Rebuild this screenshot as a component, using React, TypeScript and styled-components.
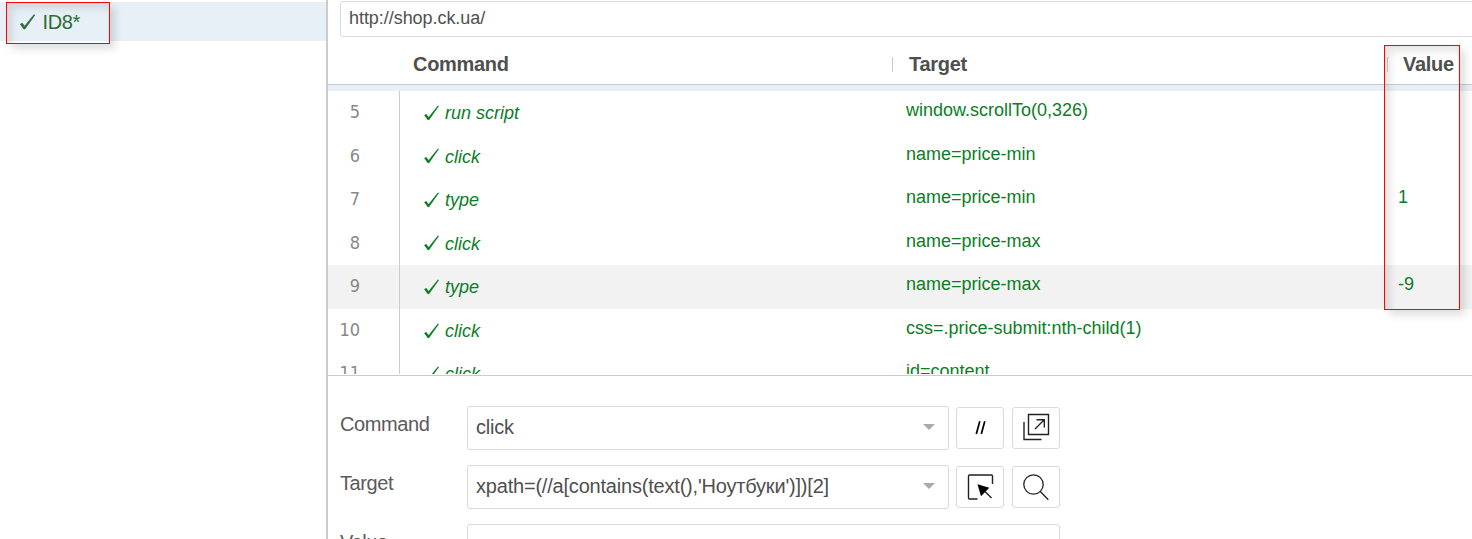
import React from "react";
import styled, { createGlobalStyle } from "styled-components";

const Global = createGlobalStyle`
  * { box-sizing: border-box; }
  body { margin: 0; background: #fff; overflow: hidden; font-family: "Liberation Sans", Arial, sans-serif; color: #4f4f4f; }
`;

const Page = styled.div`
  position: relative;
  display: flex;
  width: 1472px;
  height: 539px;
  overflow: hidden;
`;

const Sidebar = styled.aside`
  width: 328px;
  flex: none;
  padding-top: 2px;
  border-right: 2px solid #ccc;
`;

const TestItem = styled.div`
  display: flex;
  align-items: center;
  height: 39px;
  padding-left: 20px;
  background: #e7eff7;
  color: #2d6c37;
  font-size: 20px;
  white-space: pre;
`;

const TestName = styled.span`
  margin-left: 7.5px;
  padding-top: 2px;
  line-height: 37px;
  letter-spacing: -0.4px;
`;

const Main = styled.main`
  flex: 1;
  min-width: 0;
  display: flex;
  flex-direction: column;
`;

const UrlBar = styled.div`
  height: 37px;
  flex: none;
  padding: 1px 0 0 12px;
`;

const UrlField = styled.div`
  height: 36px;
  width: 1150px;
  padding-left: 8px;
  border: 1px solid #dadada;
  border-radius: 3px;
  font-size: 18px;
  line-height: 33px;
  letter-spacing: -0.05px;
`;

const columns = "71px 494px 495px 1fr";

const TableHead = styled.div`
  display: grid;
  grid-template-columns: ${columns};
  align-items: center;
  height: 48px;
  flex: none;
  padding-top: 7px;
  border-bottom: 1px solid #ccc;
  font-size: 20px;
  font-weight: bold;
  letter-spacing: -0.3px;
`;

const HeadCell = styled.div<{ $divided?: boolean }>`
  padding-left: ${(p) => (p.$divided ? 16 : 14)}px;
  line-height: 15px;
  ${(p) => p.$divided && "border-left: 1px solid #ccc; margin-left: -1px;"}

  &:last-child { padding-left: 15px; }
`;

const TableBody = styled.div`
  height: 289px;
  margin-bottom: 1px;
  flex: none;
  overflow: hidden;
  border-top: 6px solid #e7eff7;
`;

const Row = styled.div<{ $active?: boolean }>`
  display: grid;
  grid-template-columns: ${columns};
  height: 43.55px;
  background: ${(p) => (p.$active ? "#f2f2f2" : "transparent")};
  color: #0a7d25;
  font-size: 18px;
`;

const RowNumber = styled.div`
  height: 100%;
  padding-right: 39px;
  text-align: right;
  color: #888;
  font-family: "DejaVu Sans Condensed", "DejaVu Sans", sans-serif;
  font-stretch: condensed;
  font-size: 18px;
  line-height: 41px;
`;

const CommandCell = styled.div`
  display: flex;
  align-items: center;
  border-left: 1px solid #ccc;
  padding-left: 24px;
  font-style: italic;
`;

const CommandName = styled.span`
  margin-left: 6px;
  padding-top: 2px;
  line-height: 41.5px;
`;

const Cell = styled.div`
  padding-left: 13px;
  line-height: 38px;
  white-space: nowrap;
`;

const ValueCell = styled(Cell)`
  padding-left: 10px;
`;

const Form = styled.section`
  flex: 1;
  display: flex;
  flex-direction: column;
  gap: 15px;
  padding: 30px 0 0 12px;
  border-top: 1px solid #ccc;
`;

const Field = styled.div`
  display: flex;
  align-items: center;
  height: 44px;
  flex: none;
`;

const Label = styled.label`
  width: 127px;
  flex: none;
  padding-bottom: 8px;
  font-size: 20px;
  line-height: 36px;
  letter-spacing: -0.4px;
  color: #5a5a5a;
`;

const Combo = styled.div<{ $wide?: boolean }>`
  display: flex;
  align-items: center;
  justify-content: space-between;
  width: ${(p) => (p.$wide ? 593 : 482)}px;
  height: 44px;
  padding: 0 13px 2px 8px;
  border: 1px solid #dadada;
  border-radius: 3px;
  font-size: 20px;
  letter-spacing: -0.2px;
  white-space: nowrap;
`;

const Caret = styled.i`
  border: 6px solid transparent;
  border-top-color: #aaa;
  border-bottom: 0;
`;

const IconButton = styled.button`
  display: flex;
  align-items: center;
  justify-content: center;
  width: 48px;
  height: 42px;
  margin-left: 8px;
  padding: 0;
  border: 1px solid #dadada;
  border-radius: 3px;
  background: #fff;

  ${Combo} + & { margin-left: 7px; }
`;

const Highlight = styled.div<{ $x: number; $y: number; $w: number; $h: number }>`
  position: absolute;
  left: ${(p) => p.$x}px;
  top: ${(p) => p.$y}px;
  width: ${(p) => p.$w}px;
  height: ${(p) => p.$h}px;
  border: 1px solid #f00;
  pointer-events: none;
  box-shadow: 5px 5px 8px rgba(0, 0, 0, 0.13), inset 5px 5px 8px rgba(0, 0, 0, 0.11);
`;

const Check = ({ bold }: { bold?: boolean }) => (
  <svg width="15" height="16" viewBox="0 0 15 16" fill="currentColor" stroke="currentColor" strokeWidth={bold ? 0.6 : 0.2}>
    <path d="M0.3 10.2 L2.2 9 L4.6 12.2 L13.8 0.8 L14.9 1 L5 15 L3.8 15 Z" />
  </svg>
);

const CommentIcon = () => (
  <svg width="46" height="40" fill="none" stroke="#000" strokeWidth="1.7">
    <path d="M19.3 26 L22.8 13.2 M24.3 26 L27.8 13.2" />
  </svg>
);

const WindowIcon = () => (
  <svg width="46" height="40" fill="none" stroke="#222" strokeWidth="1.4">
    <path d="M15.5 6.5 H35.5 V26.5 H15.5 Z M22 21 L31 12 M23.5 11.7 H31.3 V19.5 M11 14 V31.5 H28.5" />
  </svg>
);

const SelectIcon = () => (
  <svg width="46" height="40" fill="none" stroke="#222" strokeWidth="1.4">
    <path d="M20.5 32 H12.5 Q11.5 32 11.5 31 V9.3 Q11.5 8 12.5 8 H34.5 Q35.5 8 35.5 9.3 V17" />
    <path d="M20.5 17.3 L32.3 20.8 L24 29.3 Z" fill="#000" stroke="none" />
    <path d="M28 24.5 L34.5 31" />
  </svg>
);

const SearchIcon = () => (
  <svg width="46" height="40" fill="none" stroke="#222" strokeWidth="1.3">
    <circle cx="20.5" cy="17.5" r="9.7" />
    <path d="M27.3 24.5 L35.3 32.7" />
  </svg>
);

const steps = [
  { n: 5, command: "run script", target: "window.scrollTo(0,326)", value: "" },
  { n: 6, command: "click", target: "name=price-min", value: "" },
  { n: 7, command: "type", target: "name=price-min", value: "1" },
  { n: 8, command: "click", target: "name=price-max", value: "" },
  { n: 9, command: "type", target: "name=price-max", value: "-9", active: true },
  { n: 10, command: "click", target: "css=.price-submit:nth-child(1)", value: "" },
  { n: 11, command: "click", target: "id=content", value: "" },
];

export default function App() {
  return (
    <Page>
      <Global />
      <Sidebar>
        <TestItem>
          <Check bold />
          <TestName>ID8*</TestName>
        </TestItem>
      </Sidebar>
      <Main>
        <UrlBar>
          <UrlField>http://shop.ck.ua/</UrlField>
        </UrlBar>
        <TableHead>
          <span />
          <HeadCell>Command</HeadCell>
          <HeadCell $divided>Target</HeadCell>
          <HeadCell $divided>Value</HeadCell>
        </TableHead>
        <TableBody>
          {steps.map((s) => (
            <Row key={s.n} $active={s.active}>
              <RowNumber>{s.n}</RowNumber>
              <CommandCell>
                <Check />
                <CommandName>{s.command}</CommandName>
              </CommandCell>
              <Cell>{s.target}</Cell>
              <ValueCell>{s.value}</ValueCell>
            </Row>
          ))}
        </TableBody>
        <Form>
          <Field>
            <Label>Command</Label>
            <Combo>click<Caret /></Combo>
            <IconButton aria-label="Toggle comment"><CommentIcon /></IconButton>
            <IconButton aria-label="Open in new window"><WindowIcon /></IconButton>
          </Field>
          <Field>
            <Label>Target</Label>
            <Combo>xpath=(//a[contains(text(),'Ноутбуки')])[2]<Caret /></Combo>
            <IconButton aria-label="Select target"><SelectIcon /></IconButton>
            <IconButton aria-label="Find target"><SearchIcon /></IconButton>
          </Field>
          <Field>
            <Label>Value</Label>
            <Combo $wide />
          </Field>
        </Form>
      </Main>
      <Highlight $x={6} $y={2} $w={104} $h={42} />
      <Highlight $x={1384} $y={45} $w={76} $h={265} />
    </Page>
  );
}
